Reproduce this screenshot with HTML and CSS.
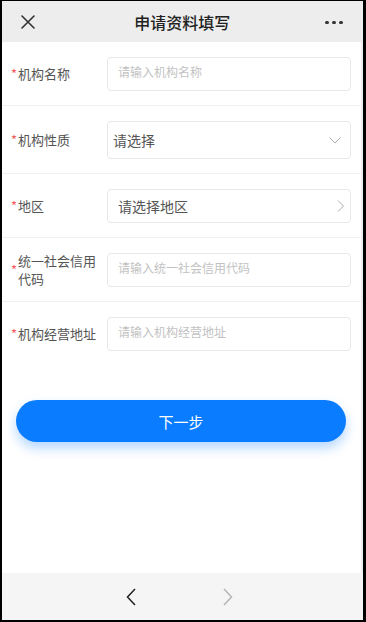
FILE: index.html
```html
<!DOCTYPE html>
<html lang="zh-CN">
<head>
<meta charset="utf-8">
<title>申请资料填写</title>
<link rel="stylesheet" href="styles.css">
</head>
<body>
<div class="frame">
  <header class="topbar">
    <span class="icon-close">
      <svg width="14" height="14" viewBox="0 0 14 14"><path d="M1 1 L13 13 M13 1 L1 13" stroke="#333" stroke-width="1.6" fill="none" stroke-linecap="round"/></svg>
    </span>
    <h1 class="title">申请资料填写</h1>
    <span class="icon-more"><i></i><i></i><i></i></span>
  </header>
  <div class="viewport">
    <main class="content">
      <div class="form">
        <div class="row">
          <div class="label"><span class="star">*</span><span class="text">机构名称</span></div>
          <div class="field input"><span class="placeholder">请输入机构名称</span></div>
        </div>
        <div class="row row-tall">
          <div class="label"><span class="star">*</span><span class="text">机构性质</span></div>
          <div class="field select"><span class="value">请选择</span>
            <svg class="chev-down" width="12" height="7" viewBox="0 0 12 7"><path d="M0.5 0.5 L6 6 L11.5 0.5" stroke="#aaa" stroke-width="1" fill="none"/></svg>
          </div>
        </div>
        <div class="row">
          <div class="label"><span class="star">*</span><span class="text">地区</span></div>
          <div class="field region"><span class="value">请选择地区</span>
            <svg class="chev-right" width="8" height="12" viewBox="0 0 8 12"><path d="M1 0.5 L6.5 6 L1 11.5" stroke="#aaa" stroke-width="1" fill="none"/></svg>
          </div>
        </div>
        <div class="row">
          <div class="label"><span class="star">*</span><span class="text">统一社会信用代码</span></div>
          <div class="field input"><span class="placeholder">请输入统一社会信用代码</span></div>
        </div>
        <div class="row last">
          <div class="label"><span class="star">*</span><span class="text">机构经营地址</span></div>
          <div class="field input"><span class="placeholder">请输入机构经营地址</span></div>
        </div>
      </div>
      <button class="next-btn" type="button">下一步</button>
    </main>
    <div class="scroll-track"></div>
  </div>
  <footer class="toolbar">
    <svg class="nav-back" width="10" height="18" viewBox="0 0 10 18"><path d="M9 1 L1.5 9 L9 17" stroke="#222" stroke-width="1.5" fill="none"/></svg>
    <svg class="nav-fwd" width="10" height="18" viewBox="0 0 10 18"><path d="M1 1 L8.5 9 L1 17" stroke="#b5b5b5" stroke-width="1.5" fill="none"/></svg>
  </footer>
</div>
</body>
</html>
```

FILE: styles.css
```css
* { box-sizing: border-box; }
html, body { margin: 0; padding: 0; }
body {
  background: #000;
  width: 366px;
  height: 622px;
  overflow: hidden;
  font-family: "Noto Sans CJK SC", "Noto Sans", sans-serif;
}
.frame {
  margin: 1px 3px 2px 2px;
  height: 619px;
  display: flex;
  flex-direction: column;
  background: #fff;
}
.topbar {
  height: 41px;
  flex: 0 0 41px;
  background: #ededed;
  display: flex;
  align-items: center;
  justify-content: space-between;
  padding: 0 20px 0 19px;
}
.icon-close { display: flex; width: 14px; height: 14px; margin-top: 1px; }
.title {
  margin: 0;
  font-size: 16px;
  font-weight: 500;
  color: #222;
  line-height: 20px;
  margin-left: 4px;
}
.icon-more { display: flex; gap: 3.5px; align-items: center; margin-top: 2px; }
.icon-more i { display: block; width: 3.5px; height: 3.5px; border-radius: 50%; background: #333; }
.viewport {
  flex: 1;
  display: flex;
  min-height: 0;
}
.content {
  flex: 1;
  background: #fff;
}
.scroll-track { width: 2px; background: #eeeeee; }
.row {
  height: 64px;
  display: flex;
  align-items: center;
  padding: 0 10px 0 9px;
  border-bottom: 1px solid #f0f0f0;
}
.row-tall { height: 68px; }
.row.last { border-bottom: none; }
.label {
  width: 96px;
  flex: 0 0 96px;
  display: flex;
  align-items: center;
  font-size: 13px;
  color: #555;
  line-height: 18px;
}
.star { color: #f05b5b; width: 7px; flex: 0 0 7px; font-size: 13px; line-height: 13px; padding-bottom: 1px; }
.text { width: 80px; }
.field {
  flex: 1;
  height: 34px;
  border: 1px solid #e8e8e8;
  border-radius: 4px;
  display: flex;
  align-items: center;
  justify-content: space-between;
  padding: 0 10px;
}
.input { align-items: flex-start; padding-top: 5px; }
.placeholder { font-size: 12px; color: #c2c2c2; line-height: 17px; }
.select { height: 38px; padding: 0 9px 0 5px; }
.value { font-size: 14px; color: #555; }
.region { padding: 0 5px 0 10px; }
.chev-down { display: block; margin-top: 1px; }
.chev-right { display: block; }
.next-btn {
  display: block;
  width: 330px;
  height: 42px;
  margin: 34px 0 0 14px;
  border: none;
  border-radius: 21px;
  background: #0a7cff;
  color: #fff;
  font-family: inherit;
  font-size: 15px;
  box-shadow: 0 6px 12px rgba(10, 124, 255, 0.3);
}
.toolbar {
  height: 47px;
  flex: 0 0 47px;
  background: #f5f5f5;
  display: flex;
  align-items: center;
  justify-content: center;
  gap: 87px;
  padding-right: 7px;
}
.nav-back, .nav-fwd { display: block; }
```
